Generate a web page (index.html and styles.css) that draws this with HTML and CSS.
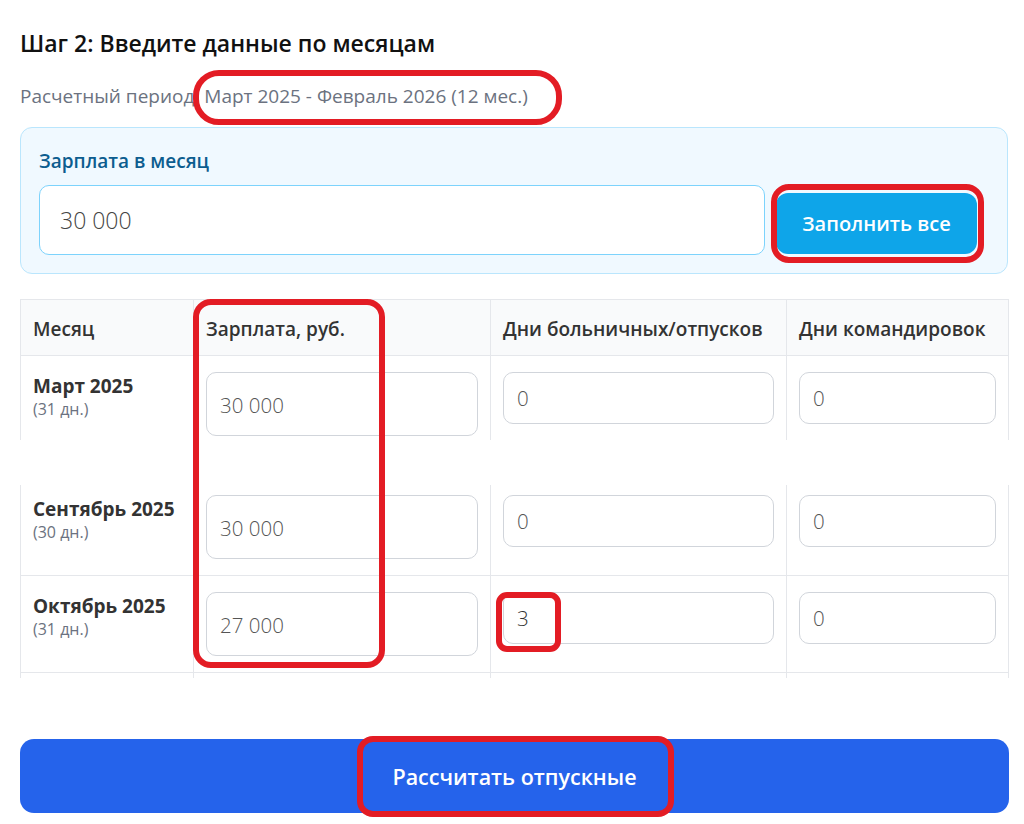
FILE: index.html
```html
<!DOCTYPE html>
<html lang="ru">
<head>
<meta charset="utf-8">
<title>Шаг 2</title>
<link rel="stylesheet" href="styles.css">
</head>
<body>
<div class="page">
  <h2 class="title">Шаг 2: Введите данные по месяцам</h2>
  <p class="period">Расчетный период: Март 2025 - Февраль 2026 (12 мес.)</p>

  <div class="fill-box">
    <div class="fill-label">Зарплата в месяц</div>
    <div class="fill-row">
      <div class="fill-input">30 000</div>
      <div class="fill-btn">Заполнить все</div>
    </div>
  </div>

  <div class="seg seg-top">
    <div class="grid head">
      <div class="cell">Месяц</div>
      <div class="cell">Зарплата, руб.</div>
      <div class="cell">Дни больничных/отпусков</div>
      <div class="cell">Дни командировок</div>
    </div>
    <div class="grid row">
      <div class="cell month"><div class="m-name">Март 2025</div><div class="m-days">(31 дн.)</div></div>
      <div class="cell"><div class="inp inp-salary">30 000</div></div>
      <div class="cell"><div class="inp inp-days">0</div></div>
      <div class="cell"><div class="inp inp-days">0</div></div>
    </div>
  </div>

  <div class="seg seg-bottom">
    <div class="seg-inner">
      <div class="grid row">
        <div class="cell month"><div class="m-name">Сентябрь 2025</div><div class="m-days">(30 дн.)</div></div>
        <div class="cell"><div class="inp inp-salary">30 000</div></div>
        <div class="cell"><div class="inp inp-days">0</div></div>
        <div class="cell"><div class="inp inp-days">0</div></div>
      </div>
      <div class="grid row">
        <div class="cell month"><div class="m-name">Октябрь 2025</div><div class="m-days">(31 дн.)</div></div>
        <div class="cell"><div class="inp inp-salary">27 000</div></div>
        <div class="cell"><div class="inp inp-days inp-dark">3</div></div>
        <div class="cell"><div class="inp inp-days">0</div></div>
      </div>
      <div class="grid row">
        <div class="cell month"><div class="m-name">Ноябрь 2025</div><div class="m-days">(30 дн.)</div></div>
        <div class="cell"><div class="inp inp-salary">30 000</div></div>
        <div class="cell"><div class="inp inp-days">0</div></div>
        <div class="cell"><div class="inp inp-days">0</div></div>
      </div>
    </div>
  </div>

  <div class="calc-btn">Рассчитать отпускные</div>

  <div class="mark mark-period"></div>
  <div class="mark mark-fill"></div>
  <div class="mark mark-salary"></div>
  <div class="mark mark-three"></div>
  <div class="mark mark-calc"></div>
</div>
</body>
</html>
```

FILE: styles.css
```css
* { box-sizing: border-box; }
html, body { margin: 0; padding: 0; background: #fff; }
body { font-family: "Open Sans", "Liberation Sans", sans-serif; color: #1f2937; }

.page {
  position: relative;
  width: 1024px;
  height: 824px;
  padding: 28px 0 0 20px;
  overflow: hidden;
}

.title {
  margin: 0;
  font-size: 23px;
  line-height: 30px;
  font-weight: 600;
  color: #111;
}

.period {
  margin: 26px 0 0;
  font-size: 19px;
  line-height: 24px;
  color: #6b7280;
}

.fill-box {
  margin-top: 19px;
  width: 988px;
  height: 147px;
  background: #f0f9ff;
  border: 1px solid #bae6fd;
  border-radius: 12px;
  padding: 21px 30px 0 18px;
}
.fill-label {
  font-size: 19px;
  line-height: 24px;
  font-weight: 600;
  color: #0c5d8f;
}
.fill-row {
  margin-top: 12px;
  display: flex;
  align-items: flex-start;
  gap: 11px;
}
.fill-input {
  flex: 1;
  height: 70px;
  background: #fff;
  border: 1px solid #7dd3fc;
  border-radius: 10px;
  padding-left: 20px;
  display: flex;
  align-items: center;
  font-size: 23px;
  font-weight: 300;
  color: #444;
}
.fill-btn {
  margin-top: 8px;
  width: 201px;
  height: 61px;
  background: #0ea5e9;
  border-radius: 12px;
  color: #fff;
  font-size: 20px;
  font-weight: 600;
  display: flex;
  align-items: center;
  justify-content: center;
}

.seg {
  width: 989px;
  overflow: hidden;
  border-left: 1px solid #e5e7eb;
}
.seg-top { margin-top: 25px; height: 141px; }
.seg-bottom { margin-top: 45px; height: 193px; }
.seg-inner { margin-top: -6px; }

.grid {
  display: grid;
  grid-template-columns: 173px 297px 296px 222px;
}
.cell {
  border-right: 1px solid #e5e7eb;
  border-bottom: 1px solid #e5e7eb;
  padding: 0 12px;
}
.head { border-top: 1px solid #e5e7eb; background: #f9fafb; }
.head .cell {
  height: 56px;
  display: flex;
  align-items: center;
  padding-top: 3px;
  font-size: 19px;
  font-weight: 600;
  color: #333;
}
.row .cell { height: 97px; padding-top: 16px; }
.month { padding-top: 18px !important; }
.m-name { font-size: 19px; line-height: 24px; font-weight: 700; color: #333; }
.m-days { font-size: 16px; line-height: 22px; color: #6b7280; }

.inp {
  width: 100%;
  background: #fff;
  border: 1px solid #d1d5db;
  border-radius: 10px;
  padding-left: 13px;
  display: flex;
  align-items: center;
  font-weight: 300;
  color: #555;
}
.inp-salary { height: 64px; font-size: 20.5px; padding-top: 2px; }
.inp-days { height: 52px; font-size: 20.5px; }
.inp-dark { color: #333; }

.calc-btn {
  margin-top: 61px;
  width: 989px;
  height: 74px;
  background: #2563eb;
  border-radius: 14px;
  color: #fff;
  font-size: 21.5px;
  font-weight: 600;
  display: flex;
  align-items: center;
  justify-content: center;
}

.mark {
  position: absolute;
  border: 6px solid #e31c24;
}
.mark-period { left: 193px; top: 70px; width: 369px; height: 55px; border-radius: 26px; }
.mark-fill { left: 771px; top: 184px; width: 213px; height: 79px; border-radius: 18px; }
.mark-salary { left: 193px; top: 299px; width: 192px; height: 369px; border-radius: 18px; }
.mark-three { left: 496px; top: 592px; width: 65px; height: 60px; border-radius: 11px; }
.mark-calc { left: 357px; top: 736px; width: 317px; height: 81px; border-radius: 16px; }
```
